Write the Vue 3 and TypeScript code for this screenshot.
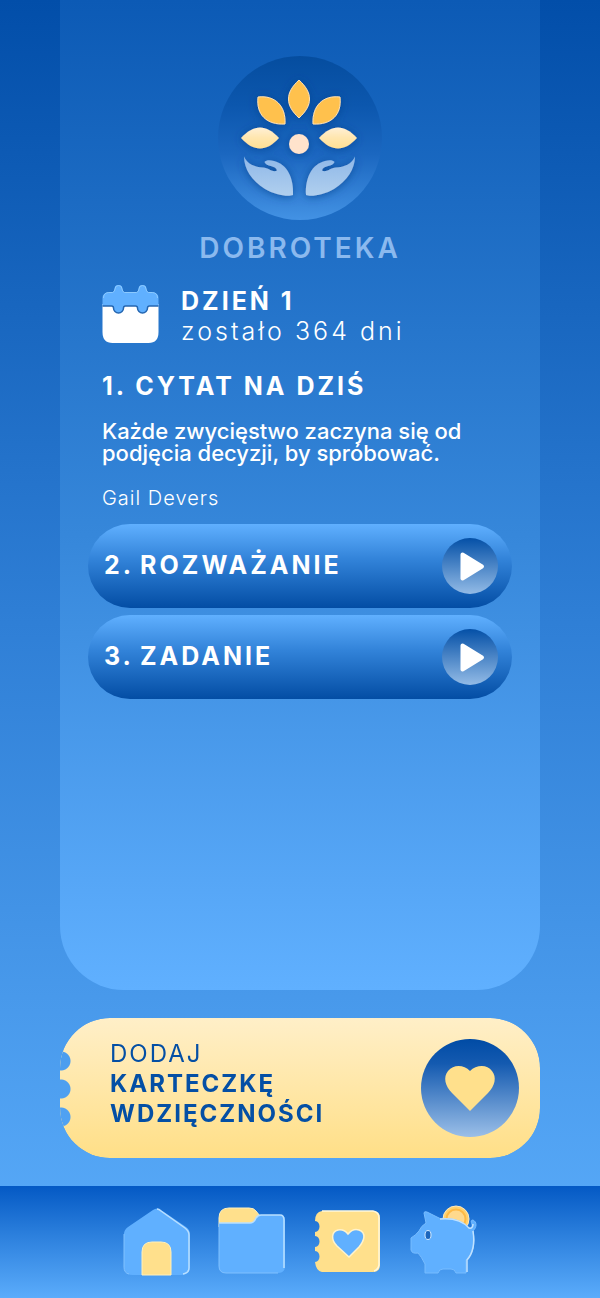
<script setup lang="ts">
interface Task {
  id: number
  label: string
}

const tasks: Task[] = [
  { id: 2, label: 'ROZWAŻANIE' },
  { id: 3, label: 'ZADANIE' },
]
const day = 1
const daysLeft = 364
</script>

<template>
  <div class="app">
    <main class="content">
      <section class="panel">
        <header class="brand">
          <svg class="logo" viewBox="0 0 164 164" aria-hidden="true">
            <defs>
              <linearGradient id="disc" x1="0" y1="0" x2="0" y2="1">
                <stop offset="0" stop-color="#054d9f" />
                <stop offset="0.3" stop-color="#0c57ae" />
                <stop offset="0.6" stop-color="#1b67c0" />
                <stop offset="1" stop-color="#4392e4" />
              </linearGradient>
              <linearGradient id="cream" x1="0" y1="0" x2="0" y2="1">
                <stop offset="0" stop-color="#fff0d6" />
                <stop offset="0.5" stop-color="#ffe6ae" />
                <stop offset="1" stop-color="#ffe094" />
              </linearGradient>
              <linearGradient id="handFill" x1="0" y1="0" x2="0" y2="1">
                <stop offset="0" stop-color="#8fb8e8" />
                <stop offset="1" stop-color="#b0cfee" />
              </linearGradient>
              <filter id="glow" x="-20%" y="-20%" width="140%" height="140%">
                <feDropShadow dx="0" dy="1" stdDeviation="5" flood-color="#003f8c" flood-opacity="0.7" />
              </filter>
              <path id="hand" d="M26 100.500C29 108 37 111 45 111.500C51 112 55 117 59 114.500C58 109 48 111 46.500 106C48 104 52 104 56 105C69 108 76 122 75 139C70 141 57 139 47 133C34 125 26 113 26 100.500Z" />
            </defs>
            <circle cx="82" cy="82" r="82" fill="url(#disc)" />
            <g filter="url(#glow)">
              <path d="M81 24C95 37 95 49 81 62C67 49 67 37 81 24Z" fill="#ffc14e" stroke="#ffe1b0" />
              <path d="M40 41C57 39 68 50 67 68C49 69 38 59 40 41Z" fill="#ffc14e" stroke="#ffe1b0" />
              <path d="M122 41C105 39 94 50 95 68C113 69 124 59 122 41Z" fill="#ffc14e" stroke="#ffe1b0" />
              <path d="M23 82C36 68 48 68 61 82C48 96 36 96 23 82Z" fill="url(#cream)" />
              <path d="M101 82C114 68 126 68 139 82C126 96 114 96 101 82Z" fill="url(#cream)" />
              <circle cx="81" cy="88" r="10" fill="#ffe3cc" />
              <use href="#hand" fill="url(#handFill)" />
              <use href="#hand" fill="url(#handFill)" transform="translate(163 0) scale(-1 1)" />
            </g>
          </svg>
          <h1 class="brand-name">DOBROTEKA</h1>
        </header>

        <div class="day">
          <svg class="calendar" viewBox="0 0 56 60" aria-hidden="true">
            <path d="M0 20H56V48Q56 59 46 59H10Q0 59 0 48Z" fill="#fff" />
            <path
              d="M6 8H10Q12 8 12 5A4 4 0 0 1 20 5Q20 8 22 8H34Q36 8 36 5A4 4 0 0 1 44 5Q44 8 46 8H50Q56 9 56 14V22H47Q45 22 45 24A5 5 0 0 1 35 24Q35 22 33 22H23Q21 22 21 24A5 5 0 0 1 11 24Q11 22 9 22H0V14Q0 9 6 8Z"
              fill="#60b0ff"
            />
            <path
              d="M0 22H9Q11 22 11 24A5 5 0 0 0 21 24Q21 22 23 22H33Q35 22 35 24A5 5 0 0 0 45 24Q45 22 47 22H56"
              fill="none" stroke="#2466b1" stroke-width="1.500"
            />
            <path
              d="M1 14Q1 9 6 8.500H10Q12 8 12.500 5A3.500 3.500 0 0 1 19.500 5Q20 8 22 8.500H34Q36 8 36.500 5A3.500 3.500 0 0 1 43.500 5Q44 8 46 8.500H50Q55 9 55 14"
              fill="none" stroke="#8ccaff" stroke-width="1"
            />
          </svg>
          <div class="day-text">
            <strong class="day-title">DZIEŃ {{ day }}</strong>
            <span class="day-left">zostało {{ daysLeft }} dni</span>
          </div>
        </div>

        <article class="quote">
          <h2 class="quote-title">1. CYTAT NA DZIŚ</h2>
          <p class="quote-text">Każde zwycięstwo zaczyna się od podjęcia decyzji, by spróbować.</p>
          <p class="quote-author">Gail Devers</p>
        </article>

        <div class="tasks">
          <button v-for="task in tasks" :key="task.id" type="button" class="task">
            <span class="task-label"><span>{{ task.id }}.</span><span>{{ task.label }}</span></span>
            <svg class="play" viewBox="0 0 56 56" aria-hidden="true">
              <defs>
                <linearGradient :id="`play-${task.id}`" x1="0" y1="0" x2="0" y2="1">
                  <stop offset="0" stop-color="#0450a7" />
                  <stop offset="1" stop-color="#93bbe6" />
                </linearGradient>
              </defs>
              <circle cx="28" cy="28" r="28" :fill="`url(#play-${task.id})`" />
              <path d="M20.500 16.500L40 28.500L20.500 40.500Z" fill="#fff" stroke="#fff" stroke-width="4" stroke-linejoin="round" />
            </svg>
          </button>
        </div>
      </section>

      <button type="button" class="ticket">
        <span class="ticket-text">
          <span>DODAJ</span>
          <strong>KARTECZKĘ</strong>
          <strong>WDZIĘCZNOŚCI</strong>
        </span>
        <svg class="heart" viewBox="0 0 98 98" aria-hidden="true">
          <defs>
            <linearGradient id="heartDisc" x1="0" y1="0" x2="0" y2="1">
              <stop offset="0" stop-color="#004ba5" />
              <stop offset="0.25" stop-color="#145ab0" />
              <stop offset="1" stop-color="#9bbfe8" />
            </linearGradient>
          </defs>
          <circle cx="49" cy="49" r="49" fill="url(#heartDisc)" />
          <path d="M49 72L31 54C24 47 22 38 27 32C33 25 43 26 49 32C55 26 66 25 71 32C76 38 74 47 67 54Z" fill="#ffe08c" />
        </svg>
      </button>
    </main>

    <nav class="tabs" aria-label="Nawigacja">
      <a href="#home" class="tab" aria-label="Start">
        <svg viewBox="-1 0 68 70" aria-hidden="true">
          <path d="M1 27Q1 23 5 20L30 3Q34 0 38 3L63 20Q67 23 67 27V60Q67 68 58 68H10Q1 68 1 60Z" fill="#60b0ff" />
          <path d="M34 2Q36 2 38 4L62 21Q66 24 66 28V61Q66 66 60 67" fill="none" stroke="#b9dfff" stroke-width="1.500" />
          <path d="M1 27V60Q1 66 6 67" fill="none" stroke="#80c1ff" />
          <path d="M19 68V45Q19 35 29 35H38Q48 35 48 45V68Z" fill="#ffe08c" stroke="#fff0bc" />
        </svg>
      </a>
      <a href="#folders" class="tab" aria-label="Foldery">
        <svg viewBox="0 0 68 70" aria-hidden="true">
          <path d="M1 20V11Q1 1 11 1H31Q36 1 38 4L42 9L34 20Z" fill="#ffe08c" stroke="#fff0bc" />
          <path d="M1 16H32Q36 16 38 11Q40 8 43 8H62Q67 8 67 13V59Q67 66 60 66H8Q1 66 1 59Z" fill="#60b0ff" />
          <path d="M1 16H32Q36 16 38 11Q40 8 43 8H62Q66 8 66 13V61" fill="none" stroke="#b9dfff" stroke-width="1.500" />
          <path d="M1 17V59Q1 66 8 66H60" fill="none" stroke="#80c1ff" />
        </svg>
      </a>
      <a href="#notes" class="tab" aria-label="Karteczki">
        <svg viewBox="1 -1 68 70" aria-hidden="true">
          <path d="M9 3H60Q67 3 67 10V57Q67 64 60 64H9Q3 63 2 54C8 54 8 43 2 43V39C8 39 8 28 2 28V24C8 24 8 13 2 13Q2 4 9 3Z" fill="#ffe08c" />
          <path d="M9 3H60Q66 4 66 10V57Q65 62 61 63" fill="none" stroke="#fff7dc" stroke-width="1.500" />
          <path d="M36 49L24 38C18 32 18 24 25 22Q31 21 35 26Q40 20 46 22C54 25 51 33 46 39Z" fill="#60b0ff" stroke="#fff3cd" stroke-width="1.500" />
        </svg>
      </a>
      <a href="#savings" class="tab" aria-label="Skarbonka">
        <svg viewBox="1 0 68 70" aria-hidden="true">
          <circle cx="47" cy="12" r="13" fill="#ffd16e" stroke="#ffe9bd" />
          <circle cx="47" cy="12" r="9.500" fill="#ffd98d" stroke="#ffba45" stroke-width="2" />
          <path
            d="M15 6Q15 4 18 5L32 12C42 11 53 13 60 21Q64 22 63 17Q61 13 64 13C68 15 68 20 64 24Q68 43 57 53V66H47Q46 62 42 62H34Q30 62 29 66H16V57Q12 49 9 46Q3 47 2 43V31Q7 28 10 24Q12 19 17 16Z"
            fill="#60b0ff" stroke="#77bcff"
          />
          <path d="M31 12C42 11 53 13 60 21Q64 22 64 17M64 24Q67 43 58 53V65" fill="none" stroke="#c1e2ff" stroke-width="1.500" />
          <ellipse cx="19" cy="28" rx="3" ry="4.500" fill="#1c66bd" stroke="#d5ebff" />
        </svg>
      </a>
    </nav>
  </div>
</template>

<style>
body {
  margin: 0;
}
</style>

<style scoped>
.app {
  display: flex;
  flex-direction: column;
  min-height: 100vh;
  font-family: Inter, "Noto Sans", sans-serif;
  color: #fff;
  background: linear-gradient(#024ea9, #2f7fd6 48%, #5caefc);
}
.content {
  flex: 1;
  display: flex;
  flex-direction: column;
  gap: 28px;
  padding: 0 10% 28px;
}
.panel {
  flex: 1;
  display: flex;
  flex-direction: column;
  padding: 56px 28px 0;
  border-radius: 0 0 64px 64px;
  background: linear-gradient(#0c5ab5, #3687da 54%, #60b0ff);
}
.brand {
  display: flex;
  flex-direction: column;
  align-items: center;
  gap: 10px;
}
.logo {
  width: 164px;
  height: 164px;
}
.brand-name {
  margin: 0;
  font-size: 28px;
  line-height: 36px;
  font-weight: 600;
  letter-spacing: 3px;
  color: #8bb9ee;
}
.day {
  display: flex;
  align-items: flex-end;
  gap: 22px;
  padding: 18px 14px 0;
}
.calendar {
  width: 57px;
  height: 60px;
}
.day-text {
  display: flex;
  flex-direction: column;
}
.day-title,
.day-left {
  font-size: 25px;
  line-height: 30px;
  letter-spacing: 3px;
}
.day-left {
  font-weight: 300;
}
.quote {
  padding: 24px 14px 0;
}
.quote-title {
  margin: 0;
  font-size: 25px;
  line-height: 32px;
  font-weight: 700;
  letter-spacing: 3px;
}
.day-text,
.quote-title {
  padding-top: 2px;
}
.day-text {
  margin-bottom: -2px;
}
.quote-text {
  margin: 18px 0 0;
  font-size: 22px;
  line-height: 22px;
  font-weight: 500;
}
.quote-author {
  margin: 22px 0 0;
  font-size: 20px;
  line-height: 24px;
  font-weight: 300;
  letter-spacing: 1px;
}
.tasks {
  display: flex;
  flex-direction: column;
  gap: 7px;
  padding-top: 14px;
}
.task {
  display: flex;
  align-items: center;
  justify-content: space-between;
  height: 84px;
  padding: 0 14px 0 16px;
  border: 0;
  border-radius: 42px;
  font: 700 25px/32px Inter, "Noto Sans", sans-serif;
  letter-spacing: 3px;
  color: #fff;
  background: linear-gradient(#60b0ff, #3283d9 42%, #034da4);
}
.task-label {
  display: flex;
  gap: 6px;
  padding-bottom: 2px;
}
.play {
  width: 56px;
  height: 56px;
}
.ticket {
  display: flex;
  align-items: center;
  justify-content: space-between;
  height: 140px;
  padding: 0 21px 0 50px;
  border: 0;
  border-radius: 50px;
  font: 400 24px/30px Inter, "Noto Sans", sans-serif;
  text-align: left;
  color: #044fa5;
  background: linear-gradient(#ffefc8, #ffdf87);
  mask:
    radial-gradient(circle at 1px 43px, #000 9px, transparent 10px),
    radial-gradient(circle at 1px 71px, #000 9px, transparent 10px),
    radial-gradient(circle at 1px 99px, #000 9px, transparent 10px),
    linear-gradient(#000, #000);
  mask-composite: exclude;
}
.ticket-text {
  display: flex;
  flex-direction: column;
  padding-bottom: 8px;
  letter-spacing: 2px;
}
.heart {
  width: 98px;
  height: 98px;
}
.tabs {
  display: flex;
  justify-content: center;
  gap: 28px;
  padding: 21px 0 20px;
  background: linear-gradient(#0459c4, #2a7edc 42%, #5bacfb);
}
.tab {
  display: block;
  width: 68px;
  height: 71px;
}
.tab svg {
  display: block;
  width: 68px;
  height: 70px;
  overflow: visible;
}
</style>
